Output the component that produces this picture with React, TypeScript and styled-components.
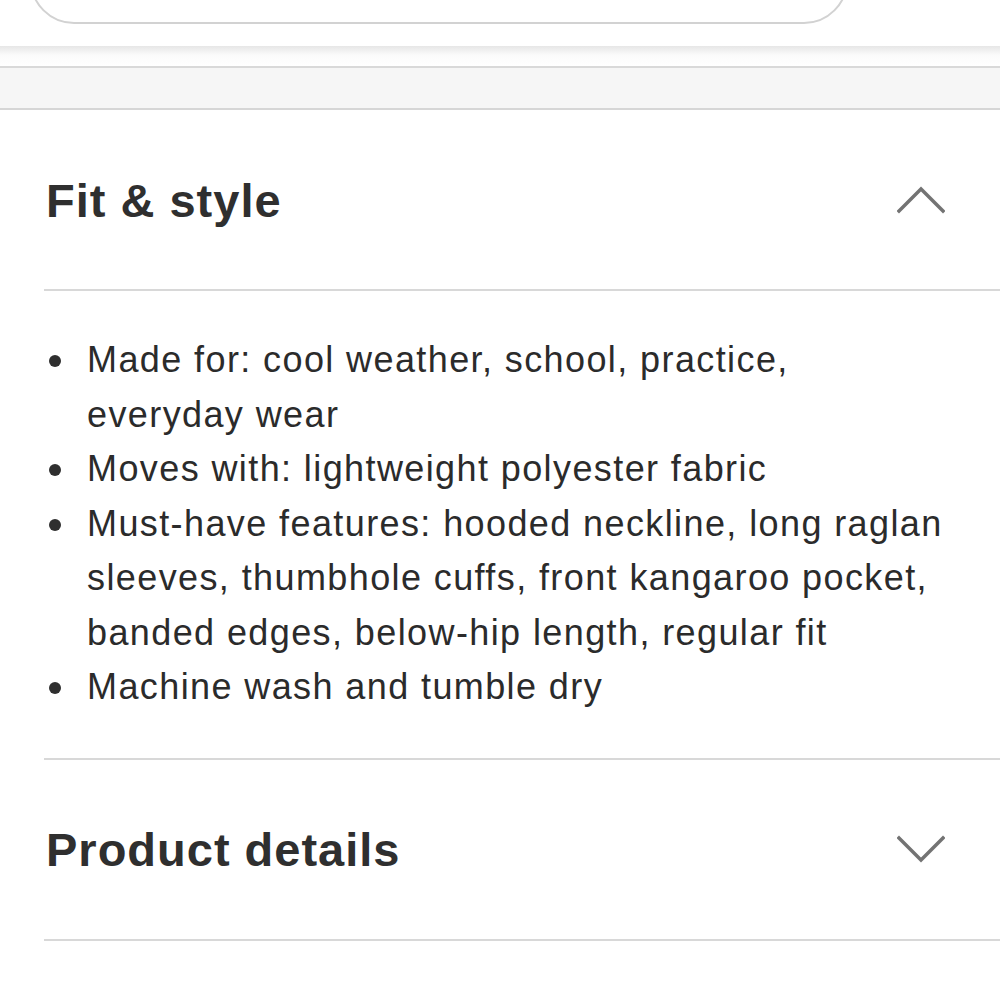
import React from "react";
import styled, { createGlobalStyle } from "styled-components";

const GlobalStyle = createGlobalStyle`
  html, body {
    margin: 0;
    padding: 0;
    background: #ffffff;
  }
  body {
    font-family: "Liberation Sans", Arial, Helvetica, sans-serif;
    color: #333333;
  }
`;

const Page = styled.div`
  width: 1000px;
  display: flex;
  flex-direction: column;
  background: #ffffff;
`;

const TopSection = styled.div`
  height: 46px;
  overflow: hidden;
  display: flex;
  align-items: flex-end;
  padding: 0 152px 22px 30px;
  box-sizing: border-box;
`;

const OutlineButton = styled.div`
  flex: 1;
  height: 100px;
  flex-shrink: 0;
  border: 2px solid #d2d2d2;
  border-radius: 44px;
  background: #ffffff;
`;

const ShadowStrip = styled.div`
  height: 20px;
  background: linear-gradient(#e6e6e6 0%, #fbfbfb 45%, #ffffff 100%);
  border-bottom: 2px solid #d9d9d9;
`;

const GrayBand = styled.div`
  height: 40px;
  background: #f6f6f6;
  border-bottom: 2px solid #d6d6d6;
`;

const Accordion = styled.section`
  margin-left: 44px;
  display: flex;
  flex-direction: column;
`;

const Header = styled.div`
  height: 179px;
  display: flex;
  align-items: center;
  justify-content: space-between;
  padding: 0 55px 0 2px;
  border-bottom: 2px solid #d8d8d8;
`;

const Title = styled.h2`
  margin: 0;
  font-family: "Liberation Sans", Arial, Helvetica, sans-serif;
  font-size: 47px;
  font-weight: 700;
  letter-spacing: 1px;
  color: #2f2f2f;
  line-height: 1;
  padding-top: 1px;
`;

const Chevron = styled.svg`
  width: 48px;
  height: 28px;
  display: block;
`;

const Content = styled.div`
  padding: 42px 45px 43px 0;
  border-bottom: 2px solid #d8d8d8;
`;

const List = styled.ul`
  margin: 0;
  padding: 0;
  list-style: none;
`;

const Item = styled.li`
  display: grid;
  grid-template-columns: 43px 1fr;
  font-family: "Liberation Sans", Arial, Helvetica, sans-serif;
  font-size: 36px;
  letter-spacing: 1.4px;
  line-height: 54.5px;
  color: #2b2b2b;
`;

const Bullet = styled.span`
  width: 12px;
  height: 12px;
  border-radius: 50%;
  background: #2f2f2f;
  margin: 22px 0 0 5px;
`;

const ItemText = styled.span`
  display: block;
`;

const ChevronIcon = ({ up }: { up: boolean }) => (
  <Chevron viewBox="0 0 48 28">
    <polyline
      points={up ? "2,25 24,3 46,25" : "2,3 24,25 46,3"}
      fill="none"
      stroke="#737373"
      strokeWidth="3.4"
      strokeLinecap="square"
      strokeLinejoin="miter"
    />
  </Chevron>
);

const items = [
  "Made for: cool weather, school, practice, everyday wear",
  "Moves with: lightweight polyester fabric",
  "Must-have features: hooded neckline, long raglan sleeves, thumbhole cuffs, front kangaroo pocket, banded edges, below-hip length, regular fit",
  "Machine wash and tumble dry",
];

export default function App() {
  return (
    <>
      <GlobalStyle />
      <Page>
        <TopSection>
          <OutlineButton />
        </TopSection>
        <ShadowStrip />
        <GrayBand />
        <Accordion>
          <Header>
            <Title>Fit &amp; style</Title>
            <ChevronIcon up />
          </Header>
          <Content>
            <List>
              {items.map((t) => (
                <Item key={t}>
                  <Bullet />
                  <ItemText>{t}</ItemText>
                </Item>
              ))}
            </List>
          </Content>
          <Header>
            <Title>Product details</Title>
            <ChevronIcon up={false} />
          </Header>
        </Accordion>
      </Page>
    </>
  );
}
